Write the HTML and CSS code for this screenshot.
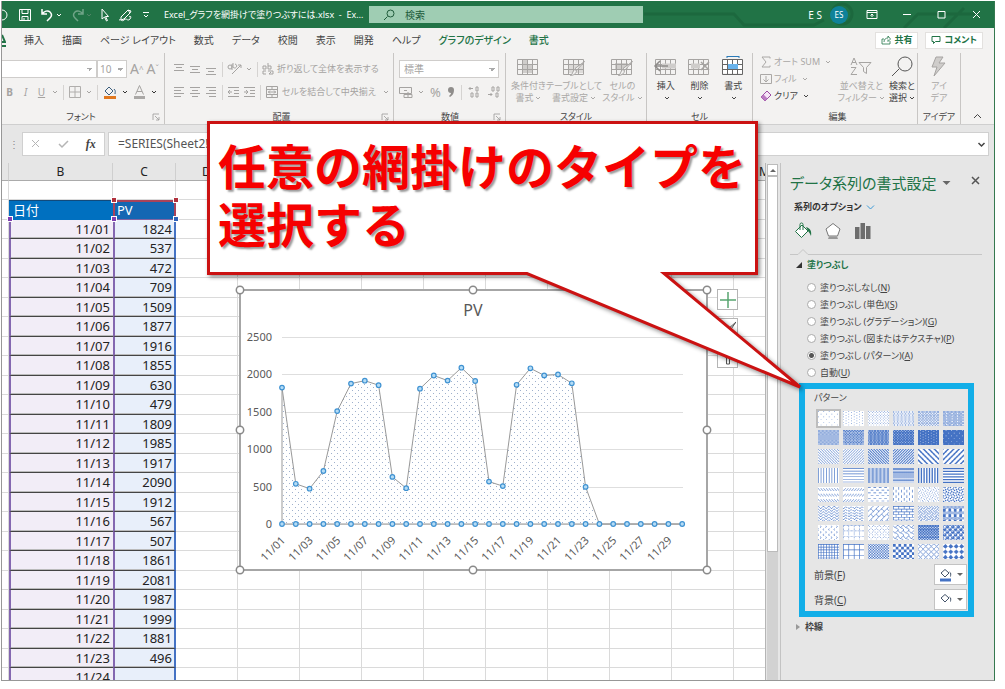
FILE: index.html
```html
<!DOCTYPE html>
<html lang="ja">
<head>
<meta charset="utf-8">
<title>Excel_グラフを網掛けで塗りつぶすには.xlsx - Excel</title>
<link rel="stylesheet" href="styles.css">
</head>
<body>
<svg class="defs" aria-hidden="true">
  <symbol id="caret" viewBox="0 0 6 6"><path d="M1 2l2 2 2-2" fill="none" stroke="currentColor"/></symbol>
  <symbol id="launch" viewBox="0 0 8 8"><path d="M1 7V1h6M3 3l4 4M7 4v3H4" fill="none" stroke="currentColor" stroke-width=".8"/></symbol>
  <symbol id="bucket" viewBox="0 0 18 18"><path d="M8 3l6 6-6.500 6.500L1.500 9.500zM6 8V2.500a1.500 1.500 0 0 1 3 0V8" fill="#fff" stroke="currentColor"/><path d="M12 5c4 1 6 4 5 9-1-2-1.500-3.500-3-5z" fill="currentColor"/></symbol>
  <symbol id="table" viewBox="0 0 24 20"><path d="M1.500 2.500h20v15h-20zM1.500 7.500h20M1.500 12.500h20M6.500 2.500v15M11.500 2.500v15M16.500 2.500v15" fill="none" stroke="currentColor"/></symbol>
  <symbol id="brush" viewBox="0 0 24 20"><path d="M22.500 4.500L15 13l-2-1.500zM14.500 13.500c0 3-3 5-6 5 2-1 2-4 4-6z" fill="#f3f2f1" stroke="currentColor"/></symbol>
</svg>

<div class="window">
  <header class="titlebar">
    <svg class="circuit" viewBox="0 0 350 27" preserveAspectRatio="xMaxYMid slice" aria-hidden="true">
      <path d="M0 13h90l10 11h70l10-5M188 13a10 10 0 1 0 20 0a10 10 0 1 0-20 0M260 27l14-14h60M300 27l20-20M-60 27a14 14 0 0 1 26 0" fill="none" stroke="#1a6239" stroke-width="3"/>
    </svg>
    <div class="quick">
      <svg width="8" height="16" viewBox="0 0 8 16"><path d="M0 3a5 5 0 0 1 0 10" fill="none" stroke="#fff"/></svg>
      <button aria-label="上書き保存"><svg width="14" height="14" viewBox="0 0 14 14"><path d="M1.500 1.500h11v11h-11zM4 1.500v4h6v-4M4 12.500v-4h6v4M6 12V10" fill="none" stroke="#fff"/></svg></button>
      <button aria-label="元に戻す"><svg width="15" height="14" viewBox="0 0 15 14"><path d="M2 1v5h5M2 6c2-3 6-4 8-2s2 4 0 6l-3 3" fill="none" stroke="#fff" stroke-width="1.500"/></svg><svg class="car"><use href="#caret"/></svg></button>
      <button class="off" aria-label="やり直し"><svg width="15" height="14" viewBox="0 0 15 14"><path d="M13 1v5H8M13 6c-2-3-6-4-8-2s-2 4 0 6l3 3" fill="none" stroke="#fff" stroke-width="1.500"/></svg><svg class="car"><use href="#caret"/></svg></button>
      <button aria-label="選択"><svg width="10" height="14" viewBox="0 0 10 14"><path d="M2 1v10l2.500-2 2 4 1-.5-2-4H8.500z" fill="none" stroke="#fff"/></svg></button>
      <button aria-label="ペン"><svg width="16" height="14" viewBox="0 0 16 14"><path d="M3 9l7-7 3 1-1 2-6 6-3 1zM10 2l2 3M1 12c3-1 2 2 5 0 3-3 3 2 6-1 2-3 0-3-1-2" fill="none" stroke="#fff"/></svg></button>
      <button aria-label="カスタマイズ"><svg width="8" height="10" viewBox="0 0 8 10"><path d="M1 2.500h6M2 5l2 2 2-2" fill="none" stroke="#fff"/></svg></button>
      <h1 class="doc">Excel_グラフを網掛けで塗りつぶすには.xlsx&nbsp; - &nbsp;Ex…</h1>
    </div>
    <label class="search"><svg width="12" height="12" viewBox="0 0 12 12"><path d="M1 11l3.500-3.500M4 4.500a3.400 3.400 0 1 0 7 0a3.400 3.400 0 1 0-7 0" fill="none" stroke="#215c3c"/></svg><input type="search" aria-label="検索" placeholder="検索"></label>
    <div class="controls">
      <span class="who">E S</span><span class="avatar">ES</span>
      <button aria-label="リボンの表示"><svg width="12" height="9" viewBox="0 0 12 9"><path d="M1 .5h10v8H1zM1 2.500h10M6 7V4M4.500 5.500L6 4l1.500 1.500" fill="none" stroke="#fff"/></svg></button>
      <button aria-label="最小化"><svg width="10" height="9" viewBox="0 0 10 9"><path d="M1 4.500h8" stroke="#fff"/></svg></button>
      <button aria-label="最大化"><svg width="9" height="9" viewBox="0 0 9 9"><path d="M1 1.500h7v6.500h-7z" fill="none" stroke="#fff"/></svg></button>
      <button aria-label="閉じる"><svg width="9" height="9" viewBox="0 0 9 9"><path d="M1 1l7 7M8 1l-7 7" stroke="#fff"/></svg></button>
    </div>
  </header>

  <nav class="tabs">
    <a class="home" href="#" aria-label="ホーム"><svg width="4" height="9" viewBox="0 0 4 9"><path d="M0 1l3 7H0" fill="none" stroke="#217346" stroke-width="2"/></svg></a>
    <a href="#">挿入</a><a href="#">描画</a><a href="#">ページ レイアウト</a><a href="#">数式</a><a href="#">データ</a><a href="#">校閲</a><a href="#">表示</a><a href="#">開発</a><a href="#">ヘルプ</a><a class="ctx" href="#">グラフのデザイン</a><a class="ctx" href="#">書式</a>
    <div class="share">
      <button><svg width="10" height="10" viewBox="0 0 10 10"><path d="M3 4H1v5h8V6M3 7c0-3 2-4 4-4V1l2.500 3L7 6.500V4.500" fill="none" stroke="#217346" stroke-width=".8"/></svg>共有</button>
      <button><svg width="10" height="10" viewBox="0 0 10 10"><path d="M1 1.500h8v5H4.500l-2 2v-2H1z" fill="none" stroke="#217346"/></svg>コメント</button>
    </div>
  </nav>

  <section class="ribbon">
    <div class="group font">
      <div class="row fonts">
        <select class="fname" aria-label="フォント名"><option></option></select><select class="fsize" aria-label="サイズ"><option>10</option></select>
        <button class="big">A<sup>^</sup></button><button class="big">A<sup>ˇ</sup></button>
      </div>
      <div class="row styles">
        <button><b>B</b></button><button><i>I</i></button><button><u>U</u></button><svg class="car"><use href="#caret"/></svg>
        <span class="bar"></span>
        <button aria-label="罫線"><svg width="12" height="12" viewBox="0 0 12 12"><path d="M.5.5h11v11H.5zM6 .5v11M.5 6h11" fill="none" stroke="#b0aeac"/></svg></button><svg class="car"><use href="#caret"/></svg>
        <span class="bar"></span>
        <button aria-label="塗りつぶしの色"><svg width="14" height="15" viewBox="0 0 14 15"><path d="M6 2l4 4-4 4-4-4zM11 4c2 2 1 3 1 5" fill="none" stroke="#3a5d7c"/><path d="M1 11h12v3H1z" fill="#e07820"/></svg></button><svg class="car dark"><use href="#caret"/></svg>
        <button aria-label="フォントの色"><svg width="13" height="15" viewBox="0 0 13 15"><path d="M2.500 9.500l4-9 4 9M4 6.500h5" fill="none" stroke="#a5a3a1"/><path d="M1 11h11v3H1z" fill="#aaa8a6"/></svg></button><svg class="car dark"><use href="#caret"/></svg>
      </div>
      <div class="name">フォント<svg class="launch"><use href="#launch"/></svg></div>
    </div>

    <div class="group align">
      <div class="row">
        <svg class="ln"><path d="M0 1.500h10M2 4.500h6M0 7.500h10"/></svg><svg class="ln"><path d="M0 3.500h10M2 6.500h6M0 9.500h10"/></svg><svg class="ln"><path d="M0 5.500h10M2 8.500h6M0 11.500h10"/></svg>
        <span class="bar"></span>
        <svg class="ln wide"><path d="M4 11L13 2M10 2h3v3M0 4a2 2 0 1 0 4 0a2 2 0 1 0-4 0M4 1v6M5 0v4a2 2 0 1 0 2-3"/></svg><svg class="car"><use href="#caret"/></svg>
        <span class="bar"></span>
        <button class="txt"><svg class="ln"><path d="M0 3h3v3H0zM5 0v6h3V3H5M3 8H0v3h3M5 8h5v3H6l2-2"/></svg>折り返して全体を表示する</button>
      </div>
      <div class="row">
        <svg class="ln"><path d="M0 1.500h10M0 4.500h7M0 7.500h10M0 10.500h7"/></svg><svg class="ln"><path d="M0 1.500h10M2 4.500h6M0 7.500h10M2 10.500h6"/></svg><svg class="ln"><path d="M0 1.500h10M3 4.500h7M0 7.500h10M3 10.500h7"/></svg>
        <span class="bar"></span>
        <svg class="ln"><path d="M0 1.500h11M6 4.500h5M6 7.500h5M0 10.500h11M4 6H0M2 4L0 6l2 2"/></svg><svg class="ln"><path d="M0 1.500h11M6 4.500h5M6 7.500h5M0 10.500h11M0 6h4M2 4l2 2-2 2"/></svg>
        <span class="bar"></span>
        <button class="txt"><svg class="ln wide"><path d="M.5.5h11v11H.5zM.5 3.500h11M.5 8.500h11M6 0v3M6 9v3M2 6h8M4 4.500L2.500 6 4 7.500M8 4.500L9.500 6 8 7.500"/></svg>セルを結合して中央揃え<svg class="car"><use href="#caret"/></svg></button>
      </div>
      <div class="name">配置<svg class="launch"><use href="#launch"/></svg></div>
    </div>

    <div class="group num">
      <div class="row"><select class="fmt" aria-label="表示形式"><option>標準</option></select></div>
      <div class="row">
        <svg class="ln wide"><path d="M.5 1.500h12v6H.500zM5 4.500h3M5 8.500h8v3H5zM9 6v6"/></svg><svg class="car"><use href="#caret"/></svg>
        <button class="pct">%</button><button aria-label="桁区切り"><svg width="8" height="12" viewBox="0 0 8 12"><path d="M1 4a3 3 0 1 1 6 0c0 3-1 5-4 7l-1-1c1-1 2-2 2-3-2 0-3-1-3-3z" fill="#8f8d8b"/></svg></button>
        <span class="bar"></span>
        <svg class="ln wide"><path d="M5 2.500H1M2.500 1L1 2.500 2.500 4M8 1h2v4H8zM3 7h2v4H3zM8 7h2v4H8z"/></svg>
        <svg class="ln wide"><path d="M5 1h2v4H5zM10 1h2v4h-2zM1 8.500h4M3.500 7L5 8.500 3.500 10M9 7h2v4H9z"/></svg>
      </div>
      <div class="name">数値<svg class="launch"><use href="#launch"/></svg></div>
    </div>

    <div class="group tall looks">
      <div class="tiles off">
        <button><svg class="ico"><path d="M7 3h5v14H7zM12 8h5v9h-5z" fill="#cfcdcb"/><use href="#table"/></svg><span>条件付き<br>書式<svg class="car"><use href="#caret"/></svg></span></button>
        <button><svg class="ico"><path d="M7 8h15v9H7z" fill="#dddbd9"/><use href="#table"/><use href="#brush"/></svg><span>テーブルとして<br>書式設定<svg class="car"><use href="#caret"/></svg></span></button>
        <button><svg class="ico"><path d="M5 7h13v7H5z" fill="#cfcdcb"/><use href="#table"/><use href="#brush"/></svg><span>セルの<br>スタイル<svg class="car"><use href="#caret"/></svg></span></button>
      </div>
      <div class="name">スタイル</div>
    </div>

    <div class="group tall">
      <div class="tiles">
        <button><svg class="ico"><use href="#table"/><path d="M8 7.500h14v5H8z" fill="#cfcdcb"/><path d="M14 10H2M6 5l-5 5 5 5" fill="none" stroke="#8e8c8a" stroke-width="1.500"/></svg><span>挿入<br><svg class="car"><use href="#caret"/></svg></span></button>
        <button><svg class="ico"><use href="#table"/><path d="M4 7.500h9v5H4z" fill="#cfcdcb"/><path d="M14 6l8 8M22 6l-8 8" stroke="#a6a4a2" stroke-width="1.500"/></svg><span>削除<br><svg class="car"><use href="#caret"/></svg></span></button>
        <button><svg class="ico ink"><path d="M2 3h19v14H2z" fill="#fff"/><use href="#table"/><path d="M7 8h10v5H7z" fill="#69b3ec"/><path d="M6 .5h12M6 0v2M18 0v2" stroke="#2a7ab8"/></svg><span>書式<br><svg class="car"><use href="#caret"/></svg></span></button>
      </div>
      <div class="name">セル</div>
    </div>

    <div class="group tall edit">
      <div class="edits">
        <div class="stack">
          <button class="off"><svg width="12" height="12" viewBox="0 0 12 12"><path d="M10 2.500V1H2l4 5-4 5h8V9.500" fill="none" stroke="currentColor"/></svg>オート SUM<svg class="car"><use href="#caret"/></svg></button>
          <button class="off"><svg width="12" height="12" viewBox="0 0 12 12"><path d="M.5 1.500h11v9H.5zM6 3v6M3.500 6.500L6 9l2.500-2.500" fill="none" stroke="currentColor"/></svg>フィル<svg class="car"><use href="#caret"/></svg></button>
          <button><svg width="12" height="12" viewBox="0 0 12 12"><path d="M7 1l4 4-6 6-4-4z" fill="#f6e5f7" stroke="#9b4ba3"/><path d="M3.500 4.500l4 4-2.500 2.500-4-4z" fill="#bb7cc2"/></svg>クリア<svg class="car"><use href="#caret"/></svg></button>
        </div>
        <div class="tiles">
          <button class="off"><svg class="ico"><path d="M2 9l3-7 3 7M3 6.500h4M2 11.500h5l-5 7h6M10 6.500h12l-4.500 5v6l-3-2v-4z" fill="none" stroke="currentColor"/></svg><span>並べ替えと<br>フィルター<svg class="car"><use href="#caret"/></svg></span></button>
          <button><svg class="ico"><path d="M2 20l7-7M8 8a7 7 0 1 0 14 0a7 7 0 1 0-14 0" fill="none" stroke="#555"/></svg><span>検索と<br>選択<svg class="car"><use href="#caret"/></svg></span></button>
        </div>
      </div>
      <div class="name">編集</div>
    </div>

    <div class="group tall idea">
      <div class="tiles off"><button><svg class="ico"><path d="M9 1h7l-4 6h6L7 20l3-9H5z" fill="#cfcdcb" stroke="currentColor"/></svg><span>アイ<br>デア</span></button></div>
      <div class="name">アイデア</div>
    </div>
    <div class="group last"><button aria-label="リボンを折りたたむ"><svg width="9" height="7" viewBox="0 0 9 7"><path d="M1 5l3.500-3.500L8 5" fill="none" stroke="#444"/></svg></button></div>
  </section>

  <div class="formula">
    <span class="grip">⋮</span>
    <div class="fx"><button aria-label="キャンセル"><svg width="10" height="10" viewBox="0 0 10 10"><path d="M1 1l7 7M8 1l-7 7" stroke="#b5b5b5"/></svg></button><button aria-label="入力"><svg width="11" height="10" viewBox="0 0 11 10"><path d="M1 5l3 3 6-6" fill="none" stroke="#b5b5b5" stroke-width="1.500"/></svg></button><button class="fn"><i>fx</i></button></div>
    <label class="expr"><input aria-label="数式バー" value="=SERIES(Sheet2!$C$2,Sheet2!$B$3:$B$32,Sheet2!$C$3:$C$32,1)"><svg width="9" height="9" viewBox="0 0 9 9"><path d="M1.500 3l3 3 3-3" fill="none" stroke="#444" stroke-width="1.500"/></svg></label>
  </div>

  <main class="work">
    <div class="sheet">
      <table class="cells">
        <colgroup><col class="ca"><col class="cb"><col class="cc"><col class="cn" span="10"></colgroup>
        <thead><tr><th></th><th>B</th><th>C</th><th>D</th><th></th><th></th><th></th><th></th><th></th><th></th><th></th><th></th><th>M</th></tr></thead>
        <tbody id="rows"></tbody>
      </table>
      <i class="knob red k1"></i><i class="knob red k2"></i><i class="knob violet k3"></i><i class="knob violet k4"></i><i class="knob blue k5"></i>
      <svg class="chart" id="chart" viewBox="0 0 467 280" role="img" aria-label="PV"></svg>
      <div class="tools">
        <button aria-label="グラフ要素"><svg width="16" height="16" viewBox="0 0 16 16"><path d="M8 0v16M0 8h16" stroke="#58a570" stroke-width="1.500"/></svg></button>
        <button aria-label="グラフスタイル"><svg width="16" height="16" viewBox="0 0 16 16"><path d="M16 1l-9 8 2 2zM7 10c-1 1-1 4-5 4 2-1 2-5 5-4z" fill="none" stroke="#555"/></svg></button>
        <button aria-label="グラフフィルター"><svg width="16" height="16" viewBox="0 0 16 16"><path d="M1 2h14L9.500 8v6h-3V8z" fill="none" stroke="#555"/></svg></button>
      </div>
    </div>
    <div class="scroll"><button aria-label="上へ"></button><span class="thumb"></span><span class="track"></span></div>

    <aside class="pane">
      <div class="phead"><h2>データ系列の書式設定</h2><svg width="9" height="6" viewBox="0 0 9 6"><path d="M.5 1h8l-4 4z" fill="#666"/></svg><button aria-label="閉じる"><svg width="9" height="9" viewBox="0 0 9 9"><path d="M1 1l7 7M8 1L1 8" stroke="#555" stroke-width="1.500"/></svg></button></div>
      <button class="opts">系列のオプション<svg width="9" height="7" viewBox="0 0 9 7"><path d="M1 1.500l3.500 3.500L8 1.500" fill="none" stroke="#3b9ad8"/></svg></button>
      <div class="kinds">
        <button aria-label="塗りつぶしと線"><svg class="green" width="18" height="18"><use href="#bucket"/></svg></button>
        <button aria-label="効果"><svg width="18" height="18" viewBox="0 0 18 18"><path d="M9 1.500l7 5.500-2.500 7h-9L2 7z" fill="#fff" stroke="#777"/><path d="M4 17l1-2.500h8l1 2.500z" fill="#999"/></svg></button>
        <button aria-label="系列のオプション"><svg width="18" height="18" viewBox="0 0 18 18"><path d="M1 5h4.500v12H1zM6.500 1h4.500v16H6.500zM12 4h4.500v13H12z" fill="#6d6d6d"/></svg></button>
      </div>
      <svg class="notch" width="192" height="7" viewBox="0 0 192 7"><path d="M0 6.500h8l5-5 5 5h174" fill="none" stroke="#c6c6c6"/></svg>
      <h3 class="fold open">塗りつぶし</h3>
      <div class="radios">
        <label><input type="radio" name="fill">塗りつぶしなし(<u>N</u>)</label>
        <label><input type="radio" name="fill">塗りつぶし (単色)(<u>S</u>)</label>
        <label><input type="radio" name="fill">塗りつぶし (グラデーション)(<u>G</u>)</label>
        <label><input type="radio" name="fill">塗りつぶし (図またはテクスチャ)(<u>P</u>)</label>
        <label><input type="radio" name="fill" checked>塗りつぶし (パターン)(<u>A</u>)</label>
        <label><input type="radio" name="fill">自動(<u>U</u>)</label>
      </div>
      <div class="marked">
        <h4>パターン</h4>
        <div class="swatches" id="swatches"></div>
        <div class="pick"><label for="fg">前景(<u>F</u>)</label><button id="fg"><svg width="13" height="14" viewBox="0 0 13 14"><path d="M6 1.500l4 3.500-4 4-4-4zM10.500 4c2 1 1 3 1 4.500" fill="none" stroke="#44546a"/><path d="M1 10.500h11v3H1z" fill="#4472c4"/></svg><i class="tri"></i></button></div>
        <div class="pick"><label for="bg">背景(<u>C</u>)</label><button id="bg"><svg width="13" height="14" viewBox="0 0 13 14"><path d="M6 1.500l4 3.500-4 4-4-4zM10.500 4c2 1 1 3 1 4.500" fill="none" stroke="#44546a"/><path d="M1 10.500h11v3H1z" fill="#fff"/></svg><i class="tri"></i></button></div>
      </div>
      <h3 class="fold shut">枠線</h3>
    </aside>
  </main>
</div>

<div class="callout">
  <svg viewBox="0 0 551 154" aria-hidden="true"><path d="M1.500 1.500H549.500V152.500H457L593 266 320 152.500H1.500z" fill="#fff" stroke="#cb1212" stroke-width="3"/></svg>
  <p>任意の網掛けのタイプを<br>選択する</p>
</div>
<script src="app.js"></script>
</body>
</html>
```
FILE: styles.css
```css
* { box-sizing: border-box; }
body {
  margin: 0; height: 100vh; padding: 1px 10px 8px 1px; background: #fff; position: relative; overflow: hidden;
  font: 10px/14px "Noto Sans", "Noto Sans CJK JP", sans-serif; font-feature-settings: "palt"; color: #444;
}
button, input, select { font: inherit; color: inherit; font-feature-settings: inherit; margin: 0; }
button { border: 0; padding: 0; background: none; display: inline-flex; align-items: center; justify-content: center; white-space: nowrap; }
h1, h2, h3, h4, p { margin: 0; font-weight: normal; }
svg { flex: none; display: block; }
.defs { position: absolute; width: 0; height: 0; }
.car { width: 6px; height: 6px; display: inline-block; margin-left: 3px; }
.off { color: #aaa8a6; }

.window { height: 100%; display: flex; flex-direction: column; border: 1px solid #979797; border-top: 0; border-right: 1px solid #35794f; background: #e6e6e6; overflow: hidden; }

.titlebar { position: relative; flex: none; height: 27px; background: #217346; color: #fff; display: grid; grid-template-columns: 367fr 274fr 351fr; align-items: center; }
.circuit { position: absolute; right: 0; top: 0; width: 350px; height: 27px; opacity: .6; }
.quick { display: flex; align-items: center; overflow: hidden; white-space: nowrap; }
.quick button { margin-left: 8px; }
.quick .off svg { opacity: .35; }
.quick .car { margin-left: 1px; }
.doc { font-size: 9px; margin-left: 14px; }
.search { position: relative; height: 17px; background: #9fcdb3; display: flex; align-items: center; padding-left: 14px; gap: 10px; }
.search input { flex: 1; min-width: 0; border: 0; background: none; padding: 0; outline: 0; }
.search input::placeholder { color: #215c3c; opacity: 1; }
.controls { position: relative; display: flex; justify-content: flex-end; align-items: center; }
.controls button { width: 35px; height: 27px; }
.who { margin-right: 8px; }
.avatar { width: 18px; height: 18px; border-radius: 50%; background: #0f8299; font-size: 8px; line-height: 18px; text-align: center; margin-right: 6px; }

.tabs { flex: none; height: 24px; background: #f3f2f1; display: flex; align-items: center; gap: 18px; }
.tabs a { color: #444; text-decoration: none; white-space: nowrap; }
.tabs .home { width: 4px; padding-bottom: 2px; border-bottom: 2px solid #217346; }
.tabs .ctx { color: #217346; font-weight: 500; }
.share { margin-left: auto; display: flex; gap: 7px; padding-right: 11px; }
.share button { height: 17px; padding: 0 5px; gap: 3px; background: #fff; border: 1px solid #e3e1df; color: #217346; font-size: 9px; font-weight: bold; }

.ribbon { flex: none; height: 73px; background: #f3f2f1; border-bottom: 1px solid #cfcfcf; display: grid; grid-template-columns: 163fr 229fr 112fr 141fr 106fr 165fr 43fr 33fr; }
.group { min-width: 0; border-right: 1px solid #c8c6c4; padding: 7px 4px 0; margin-top: 1px; display: flex; flex-direction: column; gap: 5px; color: #a5a3a1; }
.row { height: 18px; display: flex; align-items: center; gap: 6px; white-space: nowrap; }
.name { margin-top: auto; text-align: center; color: #444; font-size: 9px; line-height: 14px; position: relative; }
.launch { position: absolute; right: 0; bottom: 3px; width: 8px; height: 8px; color: #999; }
.bar { width: 1px; height: 15px; background: #d5d3d1; }
.ln { width: 11px; height: 12px; fill: none; stroke: #a5a3a1; stroke-width: 1; overflow: visible; }
.ln.wide { width: 13px; }
.row .car { margin-left: 0; }
.row .txt .car { margin-left: 4px; }
.car.dark { color: #333; }
.row select { appearance: none; height: 18px; border: 1px solid #cfcdcb; border-radius: 0; padding: 0 4px; color: #a5a3a1;
  background: linear-gradient(45deg, transparent 50%, #aaa 50%) no-repeat right 6px center / 3px 3px, linear-gradient(-45deg, transparent 50%, #aaa 50%) no-repeat right 3px center / 3px 3px, #fff; }
.row .fsize { padding: 0 2px; }
.font { padding-left: 0; }
.fonts { gap: 0; }
.fname { width: 95px; border-left: 0 !important; }
.fsize { width: 30px; }
.big { font-size: 14px; margin-left: 3px; }
.big sup { font-size: 8px; line-height: 8px; vertical-align: 6px; }
.styles { padding-left: 2px; gap: 5px; }
.styles > button:nth-child(-n+3) { width: 11px; }
.align { padding-left: 9px; }
.align .row { gap: 5px; }
.txt { gap: 3px; font-size: 9px; }
.num { padding-left: 5px; }
.fmt { width: 100px; }
.pct { font-size: 13px; }
.tall { gap: 0; padding: 3px 2px 0; }
.tiles { display: flex; justify-content: space-around; color: #444; }
.tiles.off, .tiles .off { color: #aaa8a6; }
.tiles button { flex-direction: column; justify-content: flex-start; gap: 2px; line-height: 12px; font-size: 9px; }
.looks .tiles { justify-content: space-between; padding: 0 2px 0 3px; }
.looks .ico { color: #a6a4a2; }
.ico { width: 24px; height: 22px; color: #a6a4a2; overflow: visible; }
.ico use { width: 24px; height: 20px; }
.ico.ink { color: #666; }
.tiles .car { margin-left: 2px; }
.edits { display: flex; justify-content: space-between; }
.edit { padding-left: 7px; }
.stack { display: flex; flex-direction: column; gap: 5px; align-items: flex-start; color: #444; font-size: 9px; line-height: 12px; }
.stack button { gap: 2px; }
.edits .tiles { gap: 4px; }
.idea { padding-left: 0; padding-right: 0; }
.last { border: 0; justify-content: flex-end; align-items: center; padding-bottom: 4px; }

.formula { flex: none; display: flex; align-items: center; padding: 7px 5px 7px 7px; gap: 3px; }
.grip { width: 10px; color: #888; }
.fx { width: 83px; height: 24px; background: #fff; border: 1px solid #d0d0d0; display: flex; align-items: center; justify-content: space-around; }
.fn { font: italic bold 12px "Liberation Serif", serif; color: #444; }
.expr { flex: 1; height: 24px; background: #fff; border: 1px solid #d0d0d0; display: flex; align-items: center; padding: 0 2px 0 9px; }
.expr input { flex: 1; min-width: 0; border: 0; padding: 0; font-size: 12px; background: none; color: #555; }

.work { flex: 1; min-height: 0; display: flex; }
.sheet { flex: 1; min-width: 0; position: relative; overflow: hidden; background: #fff; }
.cells { width: 794px; table-layout: fixed; border-collapse: separate; border-spacing: 0; font-size: 13px; line-height: 17px; color: #222; }
.ca { width: 7px; }
.cb { width: 104px; }
.cc { width: 63px; }
.cn { width: 62px; }
.cells th { height: 18px; padding: 0; background: #e6e6e6; font-weight: normal; font-size: 12px; border-right: 1px solid #cfcfcf; border-bottom: 1px solid #ababab; }
.cells td { height: 19px; padding: 0 2px; border-right: 1px solid #dadada; border-bottom: 1px solid #dadada; }
.cells tr:nth-child(even) td { height: 20px; }
.cells .h1 { background: #0070c0; color: #fff; border: 0; border-top: 1px solid #114a7c; padding-left: 4px; }
.cells .h2 { background: #1467b3; color: #fff; border: 2px solid #a8435a; border-bottom: 1px solid #8064a2; }
.cells .d1, .cells .d2 { text-align: right; border-bottom: 1px solid #444; box-shadow: inset 0 -1px #bbb; }
.cells .d1 { background: #f2edf7; border-left: 2px solid #8467b0; border-right: 0; padding-right: 3px; }
.cells .d2 { background: #e8effa; border-left: 2px solid #8467b0; border-right: 2px solid #4472c4; }
.knob { position: absolute; width: 4px; height: 4px; border: 1px solid #fff; box-sizing: content-box; }
.red { background: #b0303c; }
.violet { background: #8040b0; }
.blue { background: #2f62b8; }
.k1, .k2 { top: 34px; }
.k3, .k4, .k5 { top: 53px; }
.k3 { left: 5px; }
.k1, .k4 { left: 109px; }
.k2, .k5 { left: 171px; }

.chart { position: absolute; left: 238px; top: 127px; width: 467px; height: 280px; overflow: visible; font-size: 11px; }
.chart .frame { fill: #fff; stroke: #a6a6a6; stroke-width: 2; }
.chart .handle { fill: #fff; stroke: #8a8a8a; stroke-width: 1.5; }
.chart .grid { stroke: #dedede; }
.chart .area { fill: url(#dots); stroke: #999; }
.chart .pt { fill: #b5dcf5; stroke: #3f92d2; stroke-width: 1.2; }
.chart text { fill: #595959; text-anchor: end; }
.chart .title { font-size: 16px; text-anchor: middle; }
.tools { position: absolute; left: 715px; top: 126px; display: flex; flex-direction: column; gap: 8px; }
.tools button { width: 21px; height: 21px; border: 1px solid #b5b5b5; background: #fff; }

.scroll { flex: none; width: 14px; border-left: 1px solid #b5b5b5; background: #e6e6e6; display: flex; flex-direction: column; padding: 1px 1px 0; }
.scroll button { height: 12px; background: #fff; border: 1px solid #bbb; }
.scroll button::before { content: ""; border: 3px solid transparent; border-top: 0; border-bottom-color: #666; }
.thumb { flex: 375; background: #fff; border: 1px solid #bbb; }
.track { flex: 129; background: #d2d2d2; }

.pane { flex: none; width: 214px; border-left: 1px solid #c3c3c3; margin-left: 1px; padding: 10px 19px 0 9px; font-size: 9px; overflow: hidden; }
.phead { display: flex; align-items: center; gap: 6px; margin-right: -5px; }
.phead h2 { font-size: 15px; line-height: 20px; color: #217346; white-space: nowrap; }
.phead button { margin: -6px 0 0 auto; }
.opts { margin: 7px 0 0 4px; gap: 4px; font-weight: bold; color: #333; }
.kinds { display: flex; gap: 12px; margin: 8px 0 0 4px; }
.green { color: #217346; }
.notch { margin-top: 8px; width: 192px; }
.fold { display: flex; align-items: center; gap: 5px; padding-left: 6px; margin-top: 3px; font-size: 9px; font-weight: bold; }
.fold::before { content: ""; width: 6px; height: 6px; }
.open { color: #217346; }
.open::before { background: #333; clip-path: polygon(100% 0, 100% 100%, 0 100%); }
.shut::before { width: 4px; background: #999; clip-path: polygon(0 0, 100% 50%, 0 100%); }
.radios { margin: 7px -15px 0 17px; display: flex; flex-direction: column; }
.radios label { display: flex; align-items: center; height: 17px; line-height: 17px; white-space: pre; }
.radios input { appearance: none; width: 9px; height: 9px; border: 1px solid #aaa; border-radius: 50%; background: #fff; margin-right: 4px; }
.radios input:checked { background: radial-gradient(#555 0 2px, #fff 3px); }
.marked { margin: 2px 0 0 9px; border: 6px solid #12aee8; padding: 2px 1px 1px 9px; width: 175px; }
.marked h4 { font-size: 9px; line-height: 14px; }
.swatches { display: grid; grid-template-columns: repeat(6, 21px); gap: 4px; margin: 6px 0 5px 4px; }
.swatches button, .swatches svg { width: 21px; height: 15px; background: #fff; }
.swatches .on { outline: 2px solid #bdbdbd; }
.pick { display: flex; align-items: center; justify-content: space-between; height: 21px; font-size: 10px; }
.pick + .pick { margin-top: 4px; }
.pick button { width: 33px; height: 21px; background: #fff; border: 1px solid #c3c3c3; gap: 5px; }
.tri { border: 3px solid transparent; border-bottom: 0; border-top-color: #666; }

.callout { position: absolute; left: 207px; top: 121px; width: 551px; height: 154px; }
.callout svg { position: absolute; inset: 0; overflow: visible; filter: drop-shadow(2px 2px 2px rgba(0, 0, 0, .45)); }
.callout p { position: relative; padding: 14px 0 0 11px; font: bold 48px/58px "Noto Sans CJK JP", sans-serif; font-feature-settings: normal; color: #f60000; white-space: nowrap; text-shadow: 2px 2px 2px rgba(0, 0, 0, .4); }
```
FILE: app.js
```js
const pv = [1824, 537, 472, 709, 1509, 1877, 1916, 1855, 630, 479, 1809, 1985, 1917, 2090, 1912,
  567, 507, 1861, 2081, 1987, 1999, 1881, 496, 0, 0, 0, 0, 0, 0, 0];
const day = i => '11/' + String(i + 1).padStart(2, '0');

// Only the days above the fold of the sheet are listed
const rest = '<td></td>'.repeat(10);
document.getElementById('rows').innerHTML =
  `<tr><td></td><td></td><td></td>${rest}</tr>` +
  `<tr><td></td><td class="h1">日付</td><td class="h2">PV</td>${rest}</tr>` +
  pv.slice(0, 24).map((v, i) => `<tr><td></td><td class="d1">${day(i)}</td><td class="d2">${v || ''}</td>${rest}</tr>`).join('');

// Area chart
const X = i => 42 + i * 13.8;
const Y = v => 234 - v * 187 / 2500;
const dot = (x, y) => `<circle class="pt" cx="${x.toFixed(1)}" cy="${y.toFixed(1)}" r="2.3"/>`;
let c = '<defs><pattern id="dots" width="6" height="6" patternUnits="userSpaceOnUse"><rect width="6" height="6" fill="#fff"/><path d="M1 1h1v1H1zM4 4h1v1H4z" fill="#9fb0cc"/></pattern></defs>';
c += '<rect class="frame" width="467" height="280"/><text class="title" x="233" y="26">PV</text>';
for (let v = 0; v <= 2500; v += 500) {
  c += `<path class="grid" d="M42 ${Math.round(Y(v)) + 0.5}H443"/><text x="32" y="${Math.round(Y(v)) + 4}">${v}</text>`;
}
c += `<path class="area" d="M42 234L${pv.map((v, i) => X(i).toFixed(1) + ' ' + Y(v).toFixed(1)).join('L')}V234z"/>`;
pv.forEach((v, i) => {
  c += dot(X(i), Y(0));
  if (v) c += dot(X(i), Y(v));
  if (i % 2 === 0) c += `<text transform="translate(${(X(i) + 4).toFixed(1)} 251) rotate(-45)">${day(i)}</text>`;
});
for (const [x, y] of [[0, 0], [233, 0], [467, 0], [0, 140], [467, 140], [0, 280], [233, 280], [467, 280]]) {
  c += `<circle class="handle" cx="${x}" cy="${y}" r="3.7"/>`;
}
document.getElementById('chart').innerHTML = c;

// Hatch patterns: one byte per row, repeated to fill 8x8
const hatches = ('8000000008000000 80000800 88002200 8822 aa44aa11 aa55aa51 ' +
  'aa55 ee55bb55 77dd 77ffddff effffeff f7ffffff7fffffff ' +
  '88442211 11224488 cc663399 3366cc99 c1e070381c0e0783 83070e1c3870e0c1 ' +
  '88 ff000000 aa ff00 cc ffff0000 ' +
  '0000884422110000 0000112244880000 f00000000f000000 8080808008080808 8008400210012004 b130031bd8c00c8d ' +
  '81422418 001825c0 0102040818244281 ff808080ff080808 8854224588142251 aa55aa55f0f0f0f0 ' +
  '0010081000800180 aa00800080008000 8000220008002200 038448300c020101 ff66ff99 77898f8f7798f8f8 ' +
  'ff888888 ff80808080808080 99666699 f0f0f0f00f0f0f0f 8244281028448201 10387cfe7c381000').split(' ');
document.getElementById('swatches').innerHTML = hatches.map((hex, n) => {
  const rows = hex.match(/../g).map(b => parseInt(b, 16));
  let d = '';
  for (let y = 0; y < 22; y++) {
    for (let x = 0; x < 31; x++) {
      if (rows[y % rows.length] >> (7 - x % 8) & 1) d += `M${x} ${y}h1v1h-1z`;
    }
  }
  return `<button class="${n ? 'sw' : 'on'}" aria-label="パターン ${n + 1}"><svg viewBox="0 0 31 22" preserveAspectRatio="none"><path d="${d}" fill="#4472c4"/></svg></button>`;
}).join('');
```
